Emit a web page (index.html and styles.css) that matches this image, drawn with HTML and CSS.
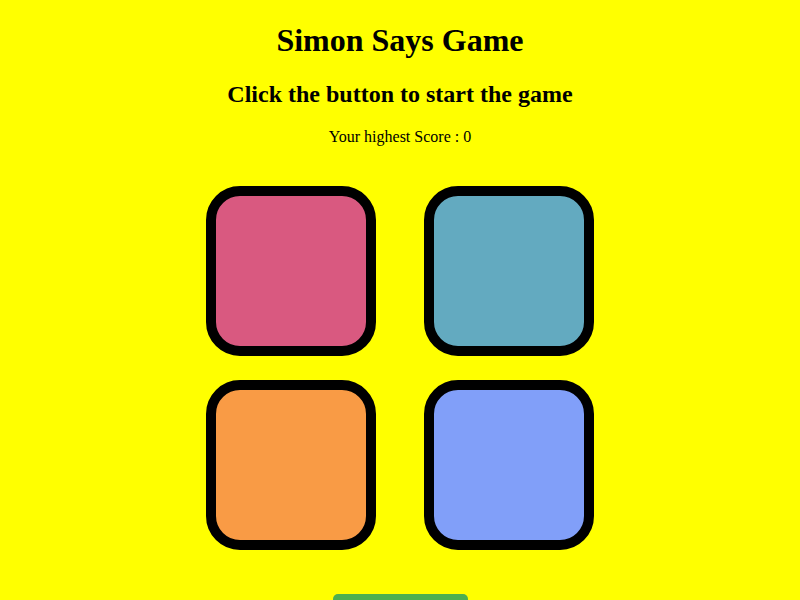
FILE: index.html
```html
<!DOCTYPE html>
<html lang="en">
<head>
<meta charset="utf-8">
<title>Simon Says Game</title>
<link rel="stylesheet" href="styles.css">
</head>
<body>
  <h1 class="title">Simon Says Game</h1>
  <h2 class="status">Click the button to start the game</h2>
  <p class="score">Your highest Score : 0</p>

  <div class="board">
    <div class="pad pad-red" id="red"></div>
    <div class="pad pad-green" id="green"></div>
    <div class="pad pad-yellow" id="yellow"></div>
    <div class="pad pad-purple" id="purple"></div>
  </div>

  <div class="actions">
    <button class="start-btn" type="button">Start Game</button>
  </div>
</body>
</html>
```

FILE: styles.css
```css
body {
  margin: 0;
  background-color: #ffff00;
  font-family: "Liberation Serif", "Times New Roman", serif;
  text-align: center;
  color: #000;
}

.title {
  font-size: 32px;
  margin: 22px 0 22px;
}

.status {
  font-size: 24px;
  margin: 20px 0;
}

.score {
  font-size: 16px;
  margin: 16px 0;
}

.board {
  display: grid;
  grid-template-columns: 170px 170px;
  justify-content: center;
  column-gap: 48px;
  row-gap: 24px;
  margin-top: 40px;
}

.pad {
  box-sizing: border-box;
  width: 170px;
  height: 170px;
  border: 10px solid #000;
  border-radius: 20%;
}

.pad-red { background-color: #d95980; }
.pad-green { background-color: #63aac0; }
.pad-yellow { background-color: #f99b45; }
.pad-purple { background-color: #819ff9; }

.actions {
  margin-top: 44px;
}

.start-btn {
  width: 135px;
  height: 40px;
  border: none;
  border-radius: 5px;
  background-color: #4caf50;
  color: #fff;
  font-family: "Liberation Serif", "Times New Roman", serif;
  font-size: 16px;
}
```
